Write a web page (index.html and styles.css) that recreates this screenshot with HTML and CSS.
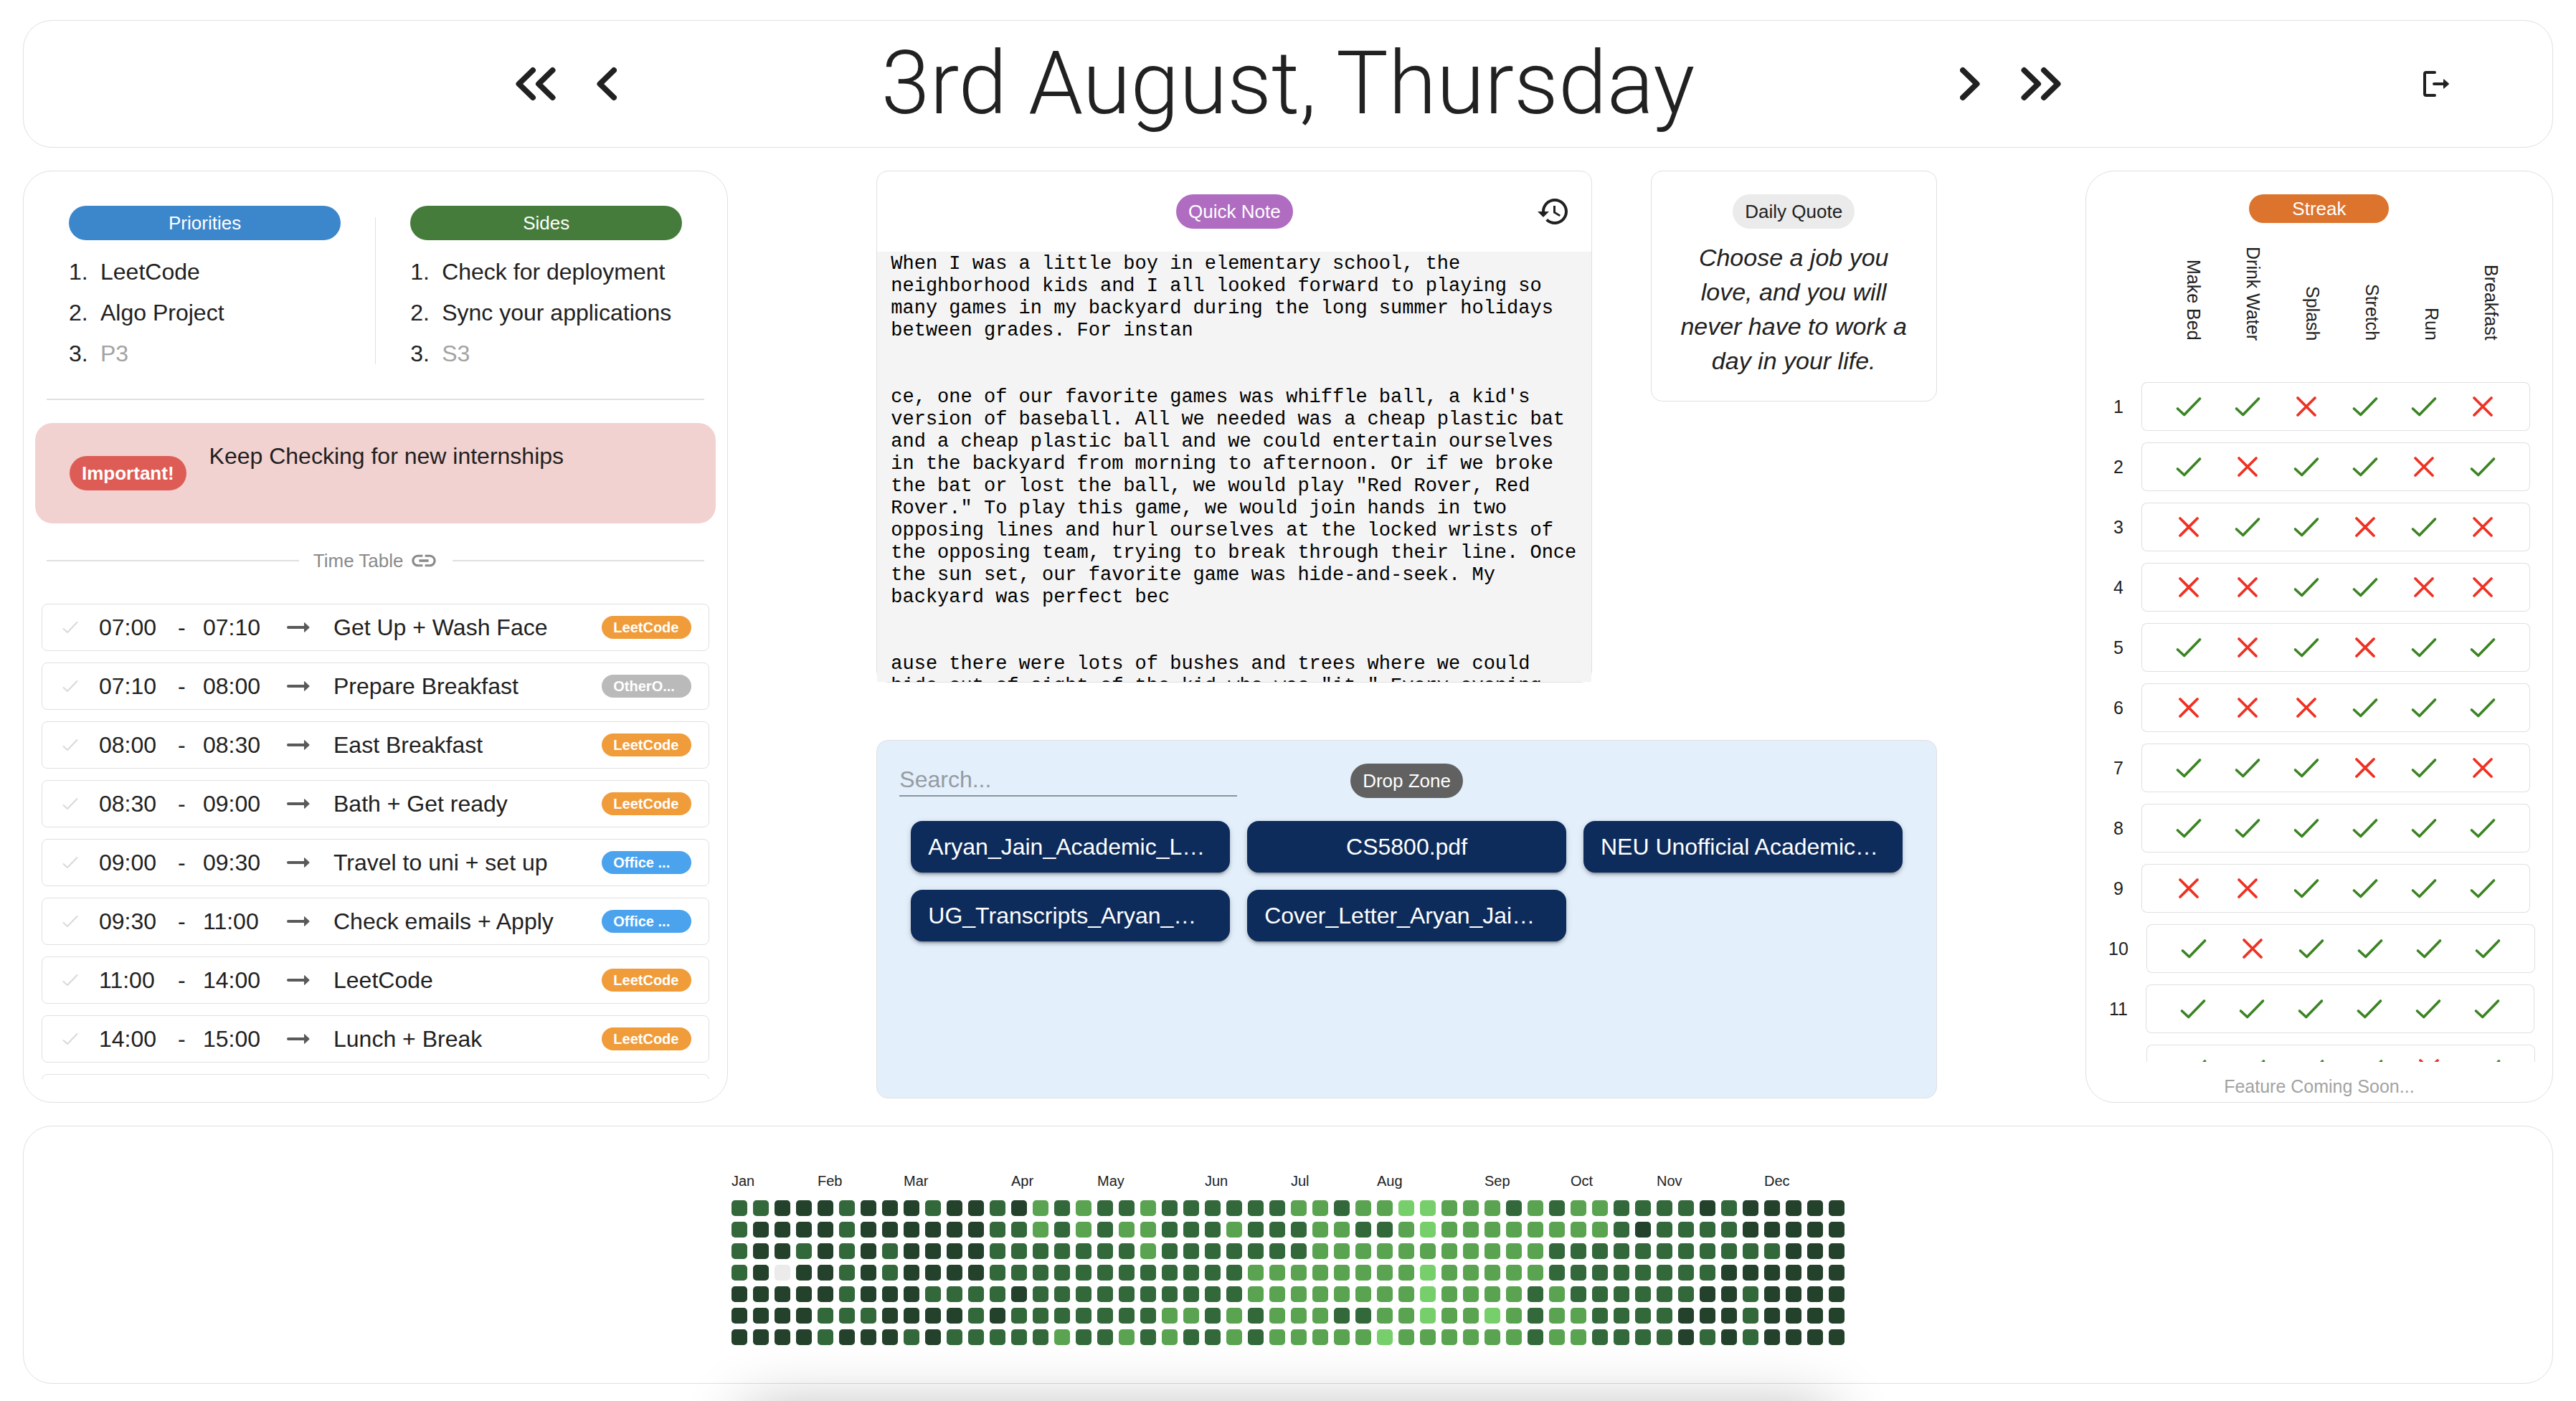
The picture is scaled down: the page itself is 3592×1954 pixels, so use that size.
FILE: index.html
```html
<!DOCTYPE html>
<html lang="en">
<head>
<meta charset="utf-8">
<meta name="viewport" content="width=device-width, initial-scale=1">
<title>Day Planner</title>
<link rel="stylesheet" href="styles.css">
</head>
<body>
<svg class="sprite" aria-hidden="true">
  <symbol id="tick" viewBox="-24 -24 48 48"><path d="M-15.5 3 L-6.3 11.5 L15.5 -11" fill="none" stroke="currentColor" stroke-width="3.6" stroke-linecap="round" stroke-linejoin="round"/></symbol>
  <symbol id="cross" viewBox="-24 -24 48 48"><path d="M-12 -12 L12 12 M12 -12 L-12 12" fill="none" stroke="currentColor" stroke-width="3.8" stroke-linecap="round"/></symbol>
  <symbol id="done" viewBox="-16 -16 32 32"><path d="M-9.5 2 L-4 7 L9.5 -7" fill="none" stroke="currentColor" stroke-width="2" stroke-linecap="round" stroke-linejoin="round"/></symbol>
  <symbol id="arrow" viewBox="0 0 32 16"><path d="M2 8 H25" fill="none" stroke="currentColor" stroke-width="4" stroke-linecap="round"/><path d="M24 1.8 Q24 .6 25 1.4 L31.2 7.2 Q32 8 31.2 8.8 L25 14.6 Q24 15.4 24 14.2 Z" fill="currentColor"/></symbol>
</svg>

<header class="card topbar">
  <nav class="nav nav-prev" aria-label="Earlier days">
    <button class="icon-btn" aria-label="Previous week"><svg width="56" height="48" viewBox="0 0 56 48"><path d="M24 5 L4.5 24 L24 43 M51.5 5 L32 24 L51.5 43" class="chevron"/></svg></button>
    <button class="icon-btn" aria-label="Previous day"><svg width="28" height="48" viewBox="0 0 28 48"><path d="M24 5 L4.5 24 L24 43" class="chevron"/></svg></button>
  </nav>
  <h1 class="date">3rd August, Thursday</h1>
  <nav class="nav nav-next" aria-label="Later days">
    <button class="icon-btn" aria-label="Next day"><svg width="28" height="48" viewBox="0 0 28 48"><path d="M4 5 L23.5 24 L4 43" class="chevron"/></svg></button>
    <button class="icon-btn" aria-label="Next week"><svg width="56" height="48" viewBox="0 0 56 48"><path d="M4.5 5 L24 24 L4.5 43 M32 5 L51.5 24 L32 43" class="chevron"/></svg></button>
  </nav>
  <button class="icon-btn logout" aria-label="Log out"><svg width="38" height="38" viewBox="0 0 38 38"><path d="M17 3 H5 Q3 3 3 5 V33 Q3 35 5 35 H17 M16 19 H30" fill="none" stroke="currentColor" stroke-width="4" stroke-linecap="round"/><path d="M29 12.8 Q29 12 29.8 12.5 L36.6 18.3 Q37.2 19 36.6 19.7 L29.8 25.5 Q29 26 29 25.2 Z" fill="currentColor"/></svg></button>
</header>

<main class="board">
  <section class="card plan">
    <div class="focus">
      <div class="focus-col">
        <h2 class="chip chip-blue">Priorities</h2>
        <ol class="tasks">
          <li><label for="p1">1.</label><input id="p1" value="LeetCode" placeholder="P1"></li>
          <li><label for="p2">2.</label><input id="p2" value="Algo Project" placeholder="P2"></li>
          <li><label for="p3">3.</label><input id="p3" placeholder="P3"></li>
        </ol>
      </div>
      <div class="focus-rule"></div>
      <div class="focus-col">
        <h2 class="chip chip-green">Sides</h2>
        <ol class="tasks">
          <li><label for="s1">1.</label><input id="s1" value="Check for deployment" placeholder="S1"></li>
          <li><label for="s2">2.</label><input id="s2" value="Sync your applications" placeholder="S2"></li>
          <li><label for="s3">3.</label><input id="s3" placeholder="S3"></li>
        </ol>
      </div>
    </div>
    <hr class="rule">
    <div class="alert">
      <label class="chip chip-red" for="important">Important!</label>
      <textarea id="important" class="alert-text" rows="2">Keep Checking for new internships</textarea>
    </div>
    <div class="divider">
      <a class="divider-link" href="#timetable">Time Table
        <svg width="40" height="40" viewBox="0 0 24 24" aria-hidden="true"><path fill="currentColor" d="M3.9 12c0-1.71 1.39-3.1 3.1-3.1h4V7H7c-2.76 0-5 2.24-5 5s2.24 5 5 5h4v-1.9H7c-1.71 0-3.1-1.39-3.1-3.1zM8 13h8v-2H8v2zm9-6h-4v1.9h4c1.71 0 3.1 1.39 3.1 3.1s-1.39 3.1-3.1 3.1h-4V17h4c2.76 0 5-2.24 5-5s-2.24-5-5-5z"/></svg></a>
    </div>
    <ul class="schedule" id="timetable"></ul>
  </section>

  <div class="middle">
    <div class="middle-top">
      <section class="panel note">
        <div class="note-head">
          <label class="chip chip-purple" for="note">Quick Note</label>
          <button class="icon-btn history" aria-label="Note history"><svg width="48" height="48" viewBox="0 0 24 24"><path fill="currentColor" d="M13 3c-4.97 0-9 4.03-9 9H1l3.89 3.89.07.14L9 12H6c0-3.87 3.13-7 7-7s7 3.13 7 7-3.13 7-7 7c-1.93 0-3.68-.79-4.94-2.06l-1.42 1.42C8.27 19.99 10.51 21 13 21c4.97 0 9-4.03 9-9s-4.03-9-9-9zm-1 5v5l4.28 2.54.72-1.21-3.5-2.08V8H12z"/></svg></button>
        </div>
        <textarea id="note" class="note-text">When I was a little boy in elementary school, the neighborhood kids and I all looked forward to playing so many games in my backyard during the long summer holidays between grades. For instan


ce, one of our favorite games was whiffle ball, a kid's version of baseball. All we needed was a cheap plastic bat and a cheap plastic ball and we could entertain ourselves in the backyard from morning to afternoon. Or if we broke the bat or lost the ball, we would play "Red Rover, Red Rover." To play this game, we would join hands in two opposing lines and hurl ourselves at the locked wrists of the opposing team, trying to break through their line. Once the sun set, our favorite game was hide-and-seek. My backyard was perfect bec


ause there were lots of bushes and trees where we could hide out of sight of the kid who was "it." Every evening</textarea>
      </section>
      <section class="panel quote">
        <h2 class="chip chip-gray">Daily Quote</h2>
        <blockquote class="quote-text">Choose a job you love, and you will never have to work a day in your life.</blockquote>
      </section>
    </div>
    <section class="panel drop">
      <div class="drop-head">
        <input class="search" type="search" placeholder="Search..." aria-label="Search files">
        <h2 class="chip chip-dark">Drop Zone</h2>
      </div>
      <div class="files">
        <button class="file file-long">Aryan_Jain_Academic_L…</button>
        <button class="file">CS5800.pdf</button>
        <button class="file file-long">NEU Unofficial Academic…</button>
        <button class="file file-long">UG_Transcripts_Aryan_…</button>
        <button class="file file-long">Cover_Letter_Aryan_Jai…</button>
      </div>
    </section>
  </div>

  <section class="card streak">
    <h2 class="chip chip-orange">Streak</h2>
    <table class="habits">
      <thead>
        <tr><th scope="col">Make Bed</th><th scope="col">Drink Water</th><th scope="col">Splash</th><th scope="col">Stretch</th><th scope="col">Run</th><th scope="col">Breakfast</th></tr>
      </thead>
      <tbody id="habit-rows"></tbody>
    </table>
    <p class="soon">Feature Coming Soon...</p>
  </section>
</main>

<footer class="card year">
  <div class="heatmap" id="heatmap"></div>
</footer>
<div class="dock-shadow"></div>
<script src="app.js"></script>
</body>
</html>
```
FILE: styles.css
```css
* { box-sizing: border-box; }

body {
  margin: 0;
  padding: 28px 32px 24px;
  background: #fff;
  color: #212121;
  font-family: "Liberation Sans", Arial, sans-serif;
  font-size: 32px;
  display: flex;
  flex-direction: column;
  gap: 32px;
}

h1, h2, p, ol, ul, blockquote { margin: 0; padding: 0; font-weight: 400; }
ol, ul { list-style: none; }
button, input, textarea { font: inherit; color: inherit; border: 0; padding: 0; margin: 0; background: none; }
button { cursor: pointer; }
textarea { resize: none; display: block; overflow: hidden; min-width: 0; }
svg { display: block; }
.sprite { position: absolute; width: 0; height: 0; }

.card { border: 1px solid #e0e0e0; border-radius: 40px; background: #fff; }
.panel { border: 1px solid #e0e0e0; border-radius: 16px; background: #fff; }

.chip {
  display: flex;
  align-items: center;
  justify-content: center;
  height: 48px;
  padding: 0 17px;
  border-radius: 24px;
  font-size: 26px;
  white-space: nowrap;
  color: #fff;
}
.chip-blue { background: #3c86cb; }
.chip-green { background: #467c3b; }
.chip-red { background: #dd5c56; font-weight: 700; }
.chip-purple { background: #af6cc1; }
.chip-gray { background: #ebebeb; color: #212121; }
.chip-dark { background: #616161; }
.chip-orange { background: #dc742e; height: 40px; width: 30%; }

/* top bar */
.topbar {
  display: grid;
  grid-template-columns: minmax(0, 324fr) minmax(0, 864fr) minmax(0, 1150fr) minmax(0, 864fr) minmax(0, 324fr);
  align-items: center;
  min-height: 178px;
}
.nav { display: flex; justify-content: center; gap: 57px; }
.nav-prev { grid-column: 2; }
.date {
  font-family: Roboto, sans-serif;
  font-weight: 300;
  font-size: 122px;
  line-height: 144px;
  text-align: center;
  white-space: nowrap;
}
.logout { justify-self: center; }
.chevron { fill: none; stroke: currentColor; stroke-width: 8; stroke-linecap: round; stroke-linejoin: round; }

/* board */
.board {
  display: grid;
  grid-template-columns: minmax(0, 983fr) minmax(0, 1478fr) minmax(0, 652fr);
  gap: 207px;
}

/* plan */
.plan { padding: 48px 0 32px; }
.focus { display: flex; padding: 0 63px; }
.focus-col { flex: 1; min-width: 0; }
.focus-rule { width: 1px; margin: 16px 48px 14px; background: #e0e0e0; }
.tasks { padding-top: 16px; }
.tasks li { display: flex; height: 57px; align-items: center; }
.tasks label { flex: none; width: 44px; }
.tasks input { flex: 1; min-width: 0; height: 48px; outline: 0; }
.tasks input::placeholder { color: #a3a3a3; }
.rule { border: 0; height: 2px; background: #e0e0e0; margin: 34px 32px 32px; }
.alert {
  display: flex;
  align-items: center;
  gap: 32px;
  margin: 0 16px;
  padding: 23px 48px;
  border-radius: 24px;
  background: #f2d2d0;
}
.alert-text { flex: 1; line-height: 47px; height: 94px; }
.divider { display: flex; align-items: center; gap: 20px; margin: 32px 32px 40px; }
.divider::before, .divider::after { content: ""; flex: 1; height: 2px; background: #e0e0e0; }
.divider-link { display: flex; align-items: center; gap: 8px; color: #8a8a8a; font-size: 26px; text-decoration: none; }

.schedule { display: flex; flex-direction: column; gap: 16px; max-height: 663px; overflow: hidden; padding: 0 25px; }
.slot {
  flex: none;
  display: grid;
  grid-template-columns: 56px 110px 35px 117px 65px 1fr 125px;
  align-items: center;
  height: 66px;
  padding: 0 24px 0 23px;
  border: 1px solid #e0e0e0;
  border-radius: 8px;
  white-space: nowrap;
}
.slot-done { width: 32px; height: 32px; color: #d9d9d9; }
.slot-done svg { width: 32px; height: 32px; }
.slot-arrow { width: 32px; height: 16px; color: #5a5a5a; }
.tag {
  height: 32px;
  line-height: 32px;
  padding: 0 16px;
  border-radius: 16px;
  font-size: 20px;
  font-weight: 700;
  color: #fff;
}
.tag-leet { background: #f09c3a; }
.tag-other { background: #bababa; }
.tag-office { background: #4ba3ee; }

/* middle column */
.middle { display: flex; flex-direction: column; gap: 80px; }
.middle-top { display: flex; justify-content: space-between; align-items: flex-start; }
.note { width: 67.5%; }
.note-head { display: grid; grid-template-columns: 1fr auto 1fr; align-items: center; height: 112px; padding: 0 29px; }
.note-head .chip { grid-column: 2; }
.history { justify-self: end; }
.note-text {
  width: 100%;
  height: 600px;
  padding: 2px 15px 0 19px;
  background: #f4f4f4;
  color: #000;
  font-family: "Liberation Mono", "Courier New", monospace;
  font-size: 27px;
  line-height: 31px;
}
.quote { width: 27%; padding: 32px 32px 20px; display: flex; flex-direction: column; align-items: center; gap: 16px; }
.quote-text { font-style: italic; font-size: 34px; line-height: 48px; text-align: center; padding-bottom: 12px; }

.drop { background: #e3effb; min-height: 500px; padding: 32px 31px; }
.drop-head { display: grid; grid-template-columns: 1fr auto 1fr; align-items: start; }
.search { width: 471px; height: 46px; border-bottom: 2px solid #8b949b; outline: 0; appearance: none; }
.search::placeholder { color: #949ca3; }
.files { display: grid; grid-template-columns: repeat(3, minmax(0, 1fr)); gap: 24px; padding: 32px 16px; }
.file {
  height: 72px;
  padding: 0 24px;
  border-radius: 16px;
  background: #0d2c5c;
  color: #fff;
  white-space: nowrap;
  overflow: hidden;
  box-shadow: 0 6px 2px -4px rgba(0, 0, 0, .2), 0 4px 4px rgba(0, 0, 0, .14), 0 2px 10px rgba(0, 0, 0, .12);
}
.file-long { text-align: left; }

/* streak */
.streak { display: flex; flex-direction: column; align-items: center; padding: 32px 0 5px; font-size: 25px; }
.habits { display: block; width: 100%; }
.habits thead { display: block; padding: 32px 0 58px 108px; }
.habits thead tr { display: flex; align-items: flex-end; height: 132px; }
.habits thead th { width: 83px; padding: 0; font-weight: 400; display: flex; writing-mode: vertical-rl; white-space: nowrap; align-items: center; justify-content: flex-end; }
.habits tbody { display: flex; flex-direction: column; gap: 16px; max-height: 948px; overflow: hidden; padding-left: 7px; }
.habits tbody tr { flex: none; display: flex; justify-content: center; align-items: center; }
.habits tbody th { padding: 0 25px 0 0; font-weight: 400; }
.habits td {
  display: flex;
  align-items: center;
  justify-content: center;
  width: 82px;
  height: 68px;
  padding: 0;
  border: solid #e0e0e0;
  border-width: 1px 0;
}
.habits td:nth-of-type(1) { width: 107px; padding-left: 24px; border-left-width: 1px; border-radius: 8px 0 0 8px; }
.habits td:last-child { width: 107px; padding-right: 24px; border-right-width: 1px; border-radius: 0 8px 8px 0; }
.habits svg { width: 48px; height: 48px; }
.hit { color: #3b8422; }
.miss { color: #ee3224; }
.soon { margin-top: 17px; line-height: 34px; color: #a3a3a3; }

/* year */
.year { padding: 64px 0 53px; }
.heatmap {
  display: grid;
  grid-template-columns: repeat(52, 22px);
  grid-template-rows: 31px;
  grid-auto-rows: 22px;
  gap: 8px;
  justify-content: center;
}
.month { grid-row: 1; font-size: 20px; line-height: 24px; white-space: nowrap; width: 0; }
.day { border-radius: 5px; }
.level-0 { background: #ebebeb; }
.level-1 { background: #76cf6a; }
.level-2 { background: #5aa350; }
.level-3 { background: #33683b; }
.level-4 { background: #23412b; }

.dock-shadow {
  position: fixed;
  top: 100%;
  left: 29%;
  right: 29%;
  height: 80px;
  margin-top: 16px;
  box-shadow: 0 0 90px rgba(0, 0, 0, .32);
  pointer-events: none;
}
```
FILE: app.js
```js
const slots = [
  ["07:00", "07:10", "Get Up + Wash Face", "LeetCode", "leet"],
  ["07:10", "08:00", "Prepare Breakfast", "OtherO...", "other"],
  ["08:00", "08:30", "East Breakfast", "LeetCode", "leet"],
  ["08:30", "09:00", "Bath + Get ready", "LeetCode", "leet"],
  ["09:00", "09:30", "Travel to uni + set up", "Office ...", "office"],
  ["09:30", "11:00", "Check emails + Apply", "Office ...", "office"],
  ["11:00", "14:00", "LeetCode", "LeetCode", "leet"],
  ["14:00", "15:00", "Lunch + Break", "LeetCode", "leet"],
  ["", "", "", "", ""]
];
document.getElementById("timetable").innerHTML = slots.map(([from, to, title, tag, kind]) =>
  from
    ? `<li class="slot"><button class="slot-done" aria-label="Mark ${title} done"><svg><use href="#done"/></svg></button>
       <span>${from}</span><span>-</span><span>${to}</span>
       <svg class="slot-arrow"><use href="#arrow"/></svg><span>${title}</span><span class="tag tag-${kind}">${tag}</span></li>`
    : `<li class="slot"></li>`
).join("");

// one string per day, one mark per habit: + kept, x missed
const habits = ["++x++x", "+x++x+", "x++x+x", "xx++xx", "+x+x++", "xxx+++",
                "+++x+x", "++++++", "xx++++", "+x++++", "++++++", "++++x+"];
document.getElementById("habit-rows").innerHTML = habits.map((row, i) =>
  `<tr><th scope="row">${i + 1}</th>` + [...row].map(mark =>
    mark === "+" ? `<td class="hit"><svg role="img" aria-label="done"><use href="#tick"/></svg></td>`
                 : `<td class="miss"><svg role="img" aria-label="missed"><use href="#cross"/></svg></td>`
  ).join("") + "</tr>"
).join("");

// month name -> first week column
const months = { Jan: 1, Feb: 5, Mar: 9, Apr: 14, May: 18, Jun: 23, Jul: 27, Aug: 31, Sep: 36, Oct: 40, Nov: 44, Dec: 49 };
// one row per weekday, split at mid-year, one digit per week, 0 to 4
const levels = [
  "33444344434434232332333333" + "22322112223232233334344444",
  "34444344444433232322333233" + "32233212222222234333344444",
  "34434343444433333332333333" + "32222222222233333333333444",
  "34044343444433333333333322" + "22222212222233333333444444",
  "44444344433334333333333322" + "22222212222323333334434444",
  "44443334444343333333223232" + "22332212212322333344434444",
  "44443444343333323323233232" + "22221222222322333343434444"
];
document.getElementById("heatmap").innerHTML =
  Object.entries(months).map(([name, col]) => `<span class="month" style="grid-column:${col}">${name}</span>`).join("") +
  levels.map((row, r) => [...row].map((level, c) =>
    `<span class="day level-${level}" style="grid-row:${r + 2};grid-column:${c + 1}"></span>`).join("")).join("");
```
